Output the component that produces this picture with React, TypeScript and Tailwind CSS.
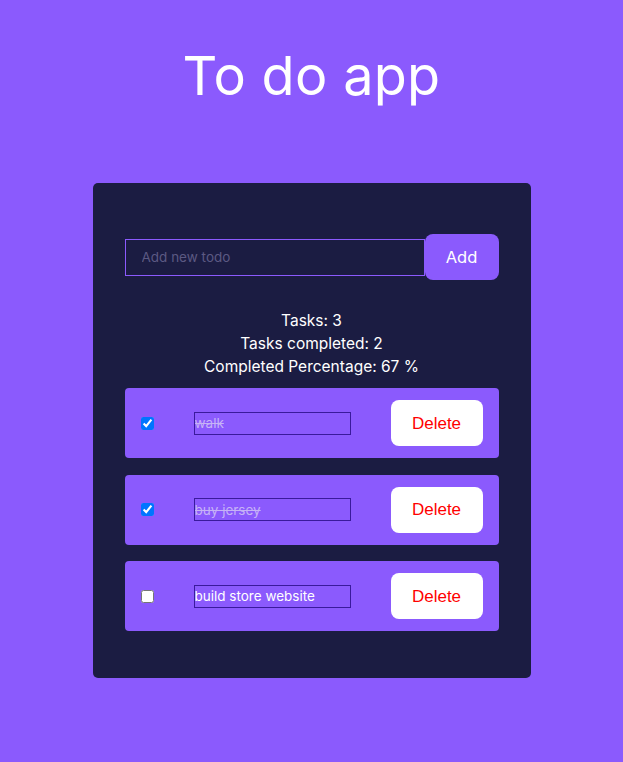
import React from "react";

const todos = [
  { text: "walk", done: true },
  { text: "buy jersey", done: true },
  { text: "build store website", done: false },
];

export default function App() {
  return (
    <div
      className="min-h-[762px] w-full bg-[#8b5afd] flex flex-col items-center"
      style={{ fontFamily: "'Inter', 'Liberation Sans', sans-serif" }}
    >
      <h1 className="mt-[44px] text-[54px] leading-[64px] text-white font-normal tracking-[0.3px]">
        To do app
      </h1>
      <div className="mt-[75px] w-[438px] h-[495px] bg-[#1b1c42] rounded-[5px] px-[32px] pt-[51px]">
        <div className="flex items-center">
          <input
            className="w-[300px] h-[37px] border border-[#8b5afd] bg-transparent pl-[16px] text-[13.5px] text-white placeholder-[#5c5982] outline-none"
            placeholder="Add new todo"
          />
          <button className="w-[74px] h-[46px] bg-[#8b5afd] rounded-[8px] text-white text-[16.5px]">
            Add
          </button>
        </div>
        <div className="mt-[29px] flex flex-col items-center text-white text-[15.5px] leading-[23px]">
          <p>Tasks: 3</p>
          <p>Tasks completed: 2</p>
          <p>Completed Percentage: 67 %</p>
        </div>
        <div className="mt-[10px] flex flex-col gap-[16.5px]">
          {todos.map((t) => (
            <div
              key={t.text}
              className="h-[70px] bg-[#8b5afd] rounded-[4px] flex items-center pl-[16px] pr-[16px]"
            >
              <input
                type="checkbox"
                defaultChecked={t.done}
                className="w-[13px] h-[13px] m-0"
              />
              <input
                defaultValue={t.text}
                className={
                  "ml-[40px] w-[157px] h-[23px] border border-[#3a1a9c] bg-transparent text-[13.5px] outline-none px-0 " +
                  (t.done ? "line-through text-[#c6b2f6]" : "text-white")
                }
              />
              <button
                className="ml-auto w-[92px] h-[46px] bg-white rounded-[8px] text-[#ff0000] text-[17px] pt-[1px]"
                style={{ fontFamily: "'Liberation Sans', sans-serif" }}
              >
                Delete
              </button>
            </div>
          ))}
        </div>
      </div>
    </div>
  );
}
